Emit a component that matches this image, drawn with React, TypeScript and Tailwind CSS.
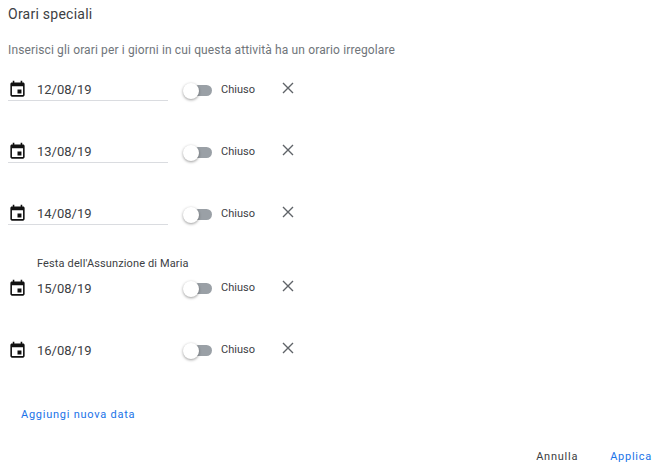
const rows = [
  { date: "12/08/19", underline: true },
  { date: "13/08/19", underline: true },
  { date: "14/08/19", underline: true },
  { date: "15/08/19", underline: false, holiday: "Festa dell'Assunzione di Maria" },
  { date: "16/08/19", underline: false },
];

function CalendarIcon() {
  return (
    <svg width="19" height="19" viewBox="0 0 24 24" className="mb-[1px] shrink-0 fill-[#111]">
      <path d="M17 12h-5v5h5v-5zM16 1v2H8V1H6v2H5c-1.11 0-1.99.9-1.99 2L3 19c0 1.1.89 2 2 2h14c1.1 0 2-.9 2-2V5c0-1.1-.9-2-2-2h-1V1h-2zm3 18H5V8h14v11z" />
    </svg>
  );
}

function Toggle() {
  return (
    <div className="relative h-[16px] w-[29px] shrink-0">
      <div className="absolute right-0 top-[2px] h-[11px] w-[24px] rounded-full bg-[#9aa0a6]" />
      <div className="absolute left-0 top-0 h-[16px] w-[16px] rounded-full bg-white shadow-[0_1px_3px_rgba(0,0,0,0.4)]" />
    </div>
  );
}

function Row({ date, underline, holiday }: { date: string; underline: boolean; holiday?: string }) {
  return (
    <div className="flex flex-col">
      {holiday && <div className="ml-[29px] h-[12px] text-[11px] leading-[13px] tracking-[0.13px] text-[#3c4043]">{holiday}</div>}
      <div className="flex h-[30px] items-end">
        <div className={`flex h-[30px] w-[160px] items-end ${underline ? "border-b border-[#dadce0]" : ""}`}>
          <CalendarIcon />
          <span className="ml-[10px] text-[13px] leading-[20px] text-[#3c4043]">{date}</span>
        </div>
        <div className="ml-[15px] flex h-[21px] items-center">
          <Toggle />
          <span className="ml-[9px] text-[11px] text-[#3c4043]">Chiuso</span>
          <svg width="12" height="12" viewBox="0 0 12 12" className="ml-[27px] mt-[-5px] stroke-[#5f6368]">
            <path d="M1 1l10 10M11 1L1 11" strokeWidth="1.4" fill="none" />
          </svg>
        </div>
      </div>
    </div>
  );
}

export default function App() {
  return (
    <div className="flex h-[470px] w-[666px] flex-col overflow-hidden bg-white pl-[8px] font-['Roboto',sans-serif]">
      <h1 className="mt-[4px] text-[14px] leading-[20px] tracking-[0.25px] text-[#3c4043]">Orari speciali</h1>
      <p className="mt-[16px] text-[12px] leading-[20px] tracking-[0.13px] text-[#70757a]">
        Inserisci gli orari per i giorni in cui questa attività ha un orario irregolare
      </p>
      <div className="mt-[11px] flex flex-col gap-[32px]">
        {rows.map((r) => (
          <Row key={r.date} {...r} />
        ))}
      </div>
      <div className="ml-[13px] mt-[47px] text-[11px] leading-[13px] tracking-[0.75px] text-[#1a73e8]">Aggiungi nuova data</div>
      <div className="mt-[29px] flex justify-end gap-[32px] pr-[14px] text-[11px] leading-[13px] tracking-[0.75px]">
        <span className="text-[#3c4043]">Annulla</span>
        <span className="text-[#1a73e8]">Applica</span>
      </div>
    </div>
  );
}
